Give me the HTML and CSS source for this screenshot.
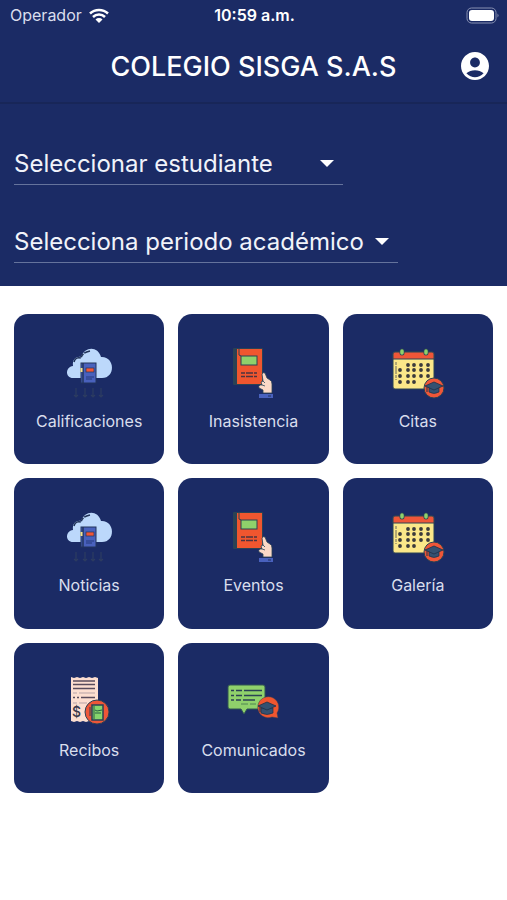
FILE: index.html
```html
<!DOCTYPE html>
<html lang="es">
<head>
    <meta charset="UTF-8">
    <meta name="viewport" content="width=device-width, initial-scale=1.0">
    <title>Colegio Sisga S.A.S</title>
    <link rel="stylesheet" href="styles.css">
</head>
<body>
    <svg class="sprite" aria-hidden="true">
        <symbol id="icon-cloud" viewBox="0 0 56 56">
            <path d="M12 33C4 33 4 22 12 21C11 14 16 11 20 12C24 1 37 1 40 12C54 11 55 33 41 33Z" fill="#bcd8fb"/>
            <path d="M13 17C14 13 17 12 20 13C21 9 24 7 29 6" fill="none" stroke="#1f3157" stroke-width="1.5" stroke-dasharray="9 1 4 1"/>
            <rect x="20" y="18" width="15" height="20" fill="#4961bd" stroke="#22345c"/>
            <path d="M22 18v20" stroke="#22345c" stroke-width="1.5"/>
            <path d="M20.500 23v4" stroke="#f4e28a" stroke-width="2"/>
            <rect x="25" y="23" width="8" height="4" fill="#ef5638" stroke="#22345c" stroke-width=".7"/>
            <path d="M25 32h8M25 34h6" stroke="#263b7c"/>
            <path d="M15 43v9m-2-2 2 2 2-2M24 43v9m-2-2 2 2 2-2M32 43v9m-2-2 2 2 2-2M40 43v9m-2-2 2 2 2-2" fill="none" stroke="#2d3c61" stroke-width="1.2"/>
        </symbol>
        <symbol id="icon-book" viewBox="0 0 56 56">
            <rect x="8" y="3" width="30" height="37" rx="1" fill="#2b4254"/>
            <rect x="12" y="4" width="25" height="35" fill="#f0562f"/>
            <path d="M14 4v6l2 1" fill="none" stroke="#2b4254"/>
            <rect x="16" y="11" width="16" height="9" fill="#8fd16b" stroke="#2b4254"/>
            <path d="M16 28h16M16 31.500h16" stroke="#4b3440" stroke-width="1.5" stroke-dasharray="4 1 7 1"/>
            <path d="M38 48v-3l-4-2q-1-2 1-3h2l-1-3 2-1-1-7q1-2 3-1l2 5 3 2q2 1 2 4v9Z" fill="#fbd9c7" stroke="#2b4254" stroke-width=".8"/>
            <path d="m37 40 3 1M38 36l2 2" stroke="#2b4254" stroke-width=".8"/>
            <rect x="34" y="49" width="14" height="4" fill="#4961bd"/>
            <path d="M43 51h3" stroke="#22345c"/>
        </symbol>
        <symbol id="icon-calendar" viewBox="0 0 56 56">
            <rect x="3" y="7" width="41" height="37" rx="2" fill="#fbe789" stroke="#2b4254"/>
            <path d="M3 14V9q0-2 2-2h37q2 0 2 2v5Z" fill="#ef5638" stroke="#2b4254"/>
            <path d="M12 6v2M36 6v2" stroke="#2b4254" stroke-width="5" stroke-linecap="round"/>
            <path d="M12 6v2M36 6v2" stroke="#8fd16b" stroke-width="3.5" stroke-linecap="round"/>
            <path d="M6 17v18" stroke="#68685a" stroke-dasharray="3 1 8 1"/>
            <path d="M18 20h0M24 20h0M31 20h0M38 20h0M10 25h0M18 25h0M24 25h0M31 25h0M38 25h0M10 31h0M18 31h0M24 31h0M31 31h0M38 31h0M10 37h0M18 37h0M24 37h0" stroke="#3b3a3c" stroke-width="3.8" stroke-linecap="round"/>
            <circle cx="44" cy="43" r="10" fill="#ef5638" stroke="#2b4254"/>
            <path d="M39 42v5q5 3 10 0v-5Z" fill="#345171" stroke="#203047" stroke-width=".7"/>
            <path d="m35 41 9-4 9 4-9 4Z" fill="#345171" stroke="#203047" stroke-width=".8"/>
            <path d="M37 42v5" stroke="#203047"/>
        </symbol>
    </svg>

    <header class="header">
        <div class="status-bar">
            <div class="carrier">
                <span>Operador</span>
                <svg class="wifi" viewBox="0 0 20 15" aria-hidden="true">
                    <path d="M1 5.500a13 13 0 0 1 18 0M4 9a8.500 8.500 0 0 1 12 0" fill="none" stroke="#fff" stroke-width="2.5"/>
                    <path d="m10 15-3.500-3.500a5 5 0 0 1 7 0Z" fill="#fff"/>
                </svg>
            </div>
            <time class="clock">10:59 a.m.</time>
            <svg class="battery" viewBox="0 0 33 17" aria-hidden="true">
                <rect x="1" y="1" width="29" height="15" rx="4.5" fill="none" stroke="#8891b3"/>
                <rect x="3" y="3" width="25" height="11" rx="3" fill="#fff"/>
                <path d="M31.500 6.500q2 2 0 4Z" fill="#8891b3"/>
            </svg>
        </div>
        <div class="app-bar">
            <h1>COLEGIO SISGA S.A.S</h1>
            <button class="account-btn" type="button" aria-label="Cuenta">
                <svg viewBox="2 2 20 20" aria-hidden="true">
                    <path fill="#fff" d="M12 2C6.480 2 2 6.480 2 12s4.480 10 10 10 10-4.480 10-10S17.520 2 12 2zm0 4c1.930 0 3.500 1.570 3.500 3.500S13.930 13 12 13s-3.500-1.570-3.500-3.500S10.070 6 12 6zm0 14c-2.030 0-4.430-.82-6.140-2.880C7.550 15.800 9.680 15 12 15s4.450.8 6.140 2.120C16.430 19.180 14.030 20 12 20z"/>
                </svg>
            </button>
        </div>
    </header>

    <form class="filters">
        <div class="field field-student">
            <select aria-label="Estudiante">
                <option>Seleccionar estudiante</option>
            </select>
        </div>
        <div class="field field-period">
            <select aria-label="Periodo académico">
                <option>Selecciona periodo académico</option>
            </select>
        </div>
    </form>

    <main class="menu">
        <a href="#" class="card"><svg class="card-icon"><use href="#icon-cloud"/></svg><span>Calificaciones</span></a>
        <a href="#" class="card"><svg class="card-icon"><use href="#icon-book"/></svg><span>Inasistencia</span></a>
        <a href="#" class="card"><svg class="card-icon"><use href="#icon-calendar"/></svg><span>Citas</span></a>
        <a href="#" class="card"><svg class="card-icon"><use href="#icon-cloud"/></svg><span>Noticias</span></a>
        <a href="#" class="card"><svg class="card-icon"><use href="#icon-book"/></svg><span>Eventos</span></a>
        <a href="#" class="card"><svg class="card-icon"><use href="#icon-calendar"/></svg><span>Galería</span></a>
        <a href="#" class="card">
            <svg class="card-icon" viewBox="0 0 56 56">
                <path d="M10 3l3 1 3-1 3 1 3-1 3 1 3-1 3 1 3-1 3 1v44l-3-1-3 1-3-1-3 1-3-1-3 1-3-1-3 1-3-1Z" fill="#fcded0"/>
                <path d="M12 7h22M12 10.500h22M12 14.500h22" stroke="#594c5c" stroke-width="1.6"/>
                <path d="M12 19h4M18 19h16M12 29h4M18 29h8" stroke="#b7a3a6"/>
                <path d="M12 23.500h2M16 23.500h2M20 23.500h14" stroke="#594c5c" stroke-width="1.6"/>
                <text x="11" y="43" class="receipt-sign">$</text>
                <circle cx="36" cy="38" r="12" fill="#ef5638" stroke="#2b4254"/>
                <rect x="31" y="31" width="11" height="15" fill="#87d66c" stroke="#2b4254" stroke-width="1.5"/>
                <path d="M33 32v13M34 36l2 1 5-1M34 39h6" fill="none" stroke="#286044"/>
                <path d="M29 33v9" stroke="#2b4254"/>
            </svg>
            <span>Recibos</span>
        </a>
        <a href="#" class="card">
            <svg class="card-icon" viewBox="0 0 56 56">
                <path d="M5 11h33q2 0 2 2v20q0 2-2 2H22l-3 5-3-5H5q-2 0-2-2V13q0-2 2-2Z" fill="#8fd16b" stroke="#315653"/>
                <path d="M6 16.500h3M11 16.500h6M19 16.500h18M6 21.500h3M11 21.500h6M19 21.500h18M6 26h3M11 26h5M18 26h12" stroke="#2b4254" stroke-width="1.5"/>
                <path d="M16 30h7M25 30h6" stroke="#4f8653"/>
                <path d="M52 39l1 5-6-1a10.500 10.500 0 1 1 5-4Z" fill="#f0562f" stroke="#3e4050" stroke-width=".5"/>
                <path d="M36 34v5q6 3 12 0v-5Z" fill="#345171" stroke="#203047" stroke-width=".7"/>
                <path d="m33 32 9-4 9 4-9 4Z" fill="#345171" stroke="#203047" stroke-width=".8"/>
                <path d="M35 33v5" stroke="#203047"/>
            </svg>
            <span>Comunicados</span>
        </a>
    </main>
</body>
</html>
```
FILE: styles.css
```css
* { margin: 0; padding: 0; box-sizing: border-box; }

body {
    font-family: 'Inter', -apple-system, BlinkMacSystemFont, 'Segoe UI', Roboto, sans-serif;
    background: #ffffff;
    color: #ffffff;
}

.sprite {
    display: block;
    width: 0;
    height: 0;
}

.header {
    background: #1b2b65;
    border-bottom: 2px solid #182658;
}

.status-bar {
    display: grid;
    grid-template-columns: 1fr auto 1fr;
    align-items: center;
    height: 30px;
    padding: 0 8px 0 10px;
    font-size: 16px;
}

.carrier {
    display: flex;
    align-items: center;
    gap: 7px;
    color: #d9deed;
}

.wifi {
    width: 20px;
    height: 15px;
}

.clock { font-weight: 600; }

.battery {
    justify-self: end;
    width: 33px;
    height: 17px;
}

.app-bar {
    display: grid;
    grid-template-columns: 28px 1fr 28px;
    align-items: center;
    height: 72px;
    padding: 0 18px;
}

.app-bar h1 {
    grid-column: 2;
    font-size: 27px;
    font-weight: 500;
    text-align: center;
    white-space: nowrap;
}

.account-btn {
    width: 28px;
    height: 28px;
    border: none;
    background: none;
    cursor: pointer;
}

.account-btn svg {
    display: block;
    width: 28px;
    height: 28px;
}

.filters {
    display: flex;
    flex-direction: column;
    gap: 34px;
    padding: 37px 14px 23px;
    background: #1b2b65;
}

.field {
    position: relative;
    max-width: 100%;
    border-bottom: 1px solid #65739c;
}

.field-student { width: 329px; }
.field-period { width: 384px; }

.field select {
    display: block;
    width: 100%;
    height: 43px;
    padding-top: 2px;
    border: none;
    background: transparent;
    color: #f1f3fa;
    font-family: inherit;
    font-size: 24px;
    appearance: none;
    cursor: pointer;
}

.field select option { color: #1b2b65; }

.field::after {
    content: '';
    position: absolute;
    top: 19px;
    right: 9px;
    border: 7px solid transparent;
    border-top-color: #ffffff;
    border-bottom: none;
    pointer-events: none;
}

.menu {
    display: grid;
    grid-template-columns: repeat(3, 1fr);
    gap: 14px;
    padding: 28px 14px;
}

.card {
    display: flex;
    flex-direction: column;
    align-items: center;
    justify-content: center;
    gap: 8px;
    aspect-ratio: 1;
    border-radius: 14px;
    background: #1b2b65;
    color: #d9deed;
    font-size: 16px;
    line-height: 24px;
    text-decoration: none;
}

.card-icon {
    width: 56px;
    height: 56px;
}

.receipt-sign {
    font-size: 14px;
    font-weight: 500;
    fill: #3b3a4c;
}
```
